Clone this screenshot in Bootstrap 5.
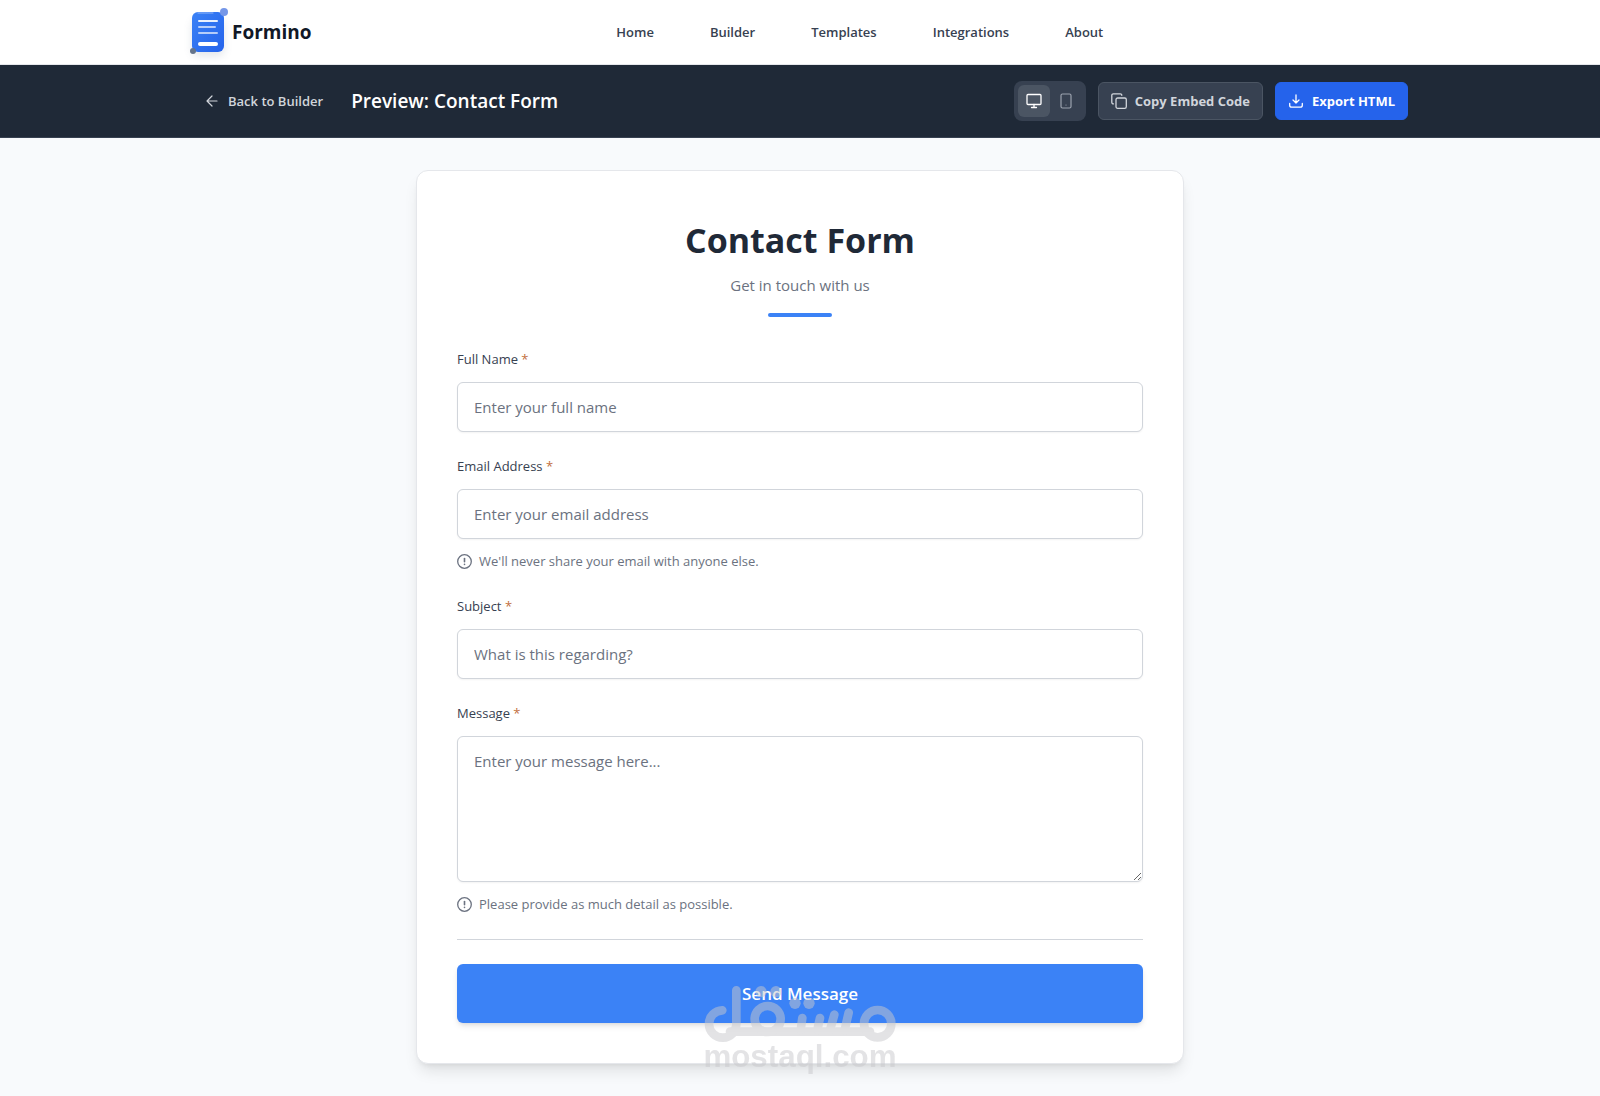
<!DOCTYPE html>
<html lang="en">
<head>
<meta charset="utf-8">
<meta name="viewport" content="width=device-width, initial-scale=1">
<title>Formino - Preview: Contact Form</title>
<link href="https://cdn.jsdelivr.net/npm/bootstrap@5.3.0/dist/css/bootstrap.min.css" rel="stylesheet">
<style>
  body { font-family: "Open Sans", "Noto Sans", sans-serif; background: #f8fafc; color: #1f2937; }
  svg { flex: none; display: block; overflow: visible; }
  .shell { max-width: 1280px; padding: 0 32px; }
  .site-head { border-bottom: 1px solid #e5e7eb; }
  .site-head .shell { min-height: 64px; }
  .brand-link { font-size: 19px; line-height: 28px; font-weight: 700; color: #111827; gap: 4px; }
  .site-nav { gap: 32px; }
  .site-nav .nav-link { padding: 8px 12px; font-size: 13px; line-height: 20px; font-weight: 600; color: #374151; }
  .preview-bar { background: #1f2937; border-bottom: 1px solid #374151; }
  .preview-bar .shell { min-height: 72px; }
  .back-link { font-size: 13px; line-height: 20px; font-weight: 600; color: #d1d5db; padding: 8px 12px; gap: 8px; }
  .preview-title { font-size: 19px; line-height: 28px; font-weight: 600; color: #fff; }
  .tools { gap: 12px; }
  .device-group { background: #374151; border-radius: 8px; padding: 4px; }
  .device-btn { width: 32px; height: 32px; padding: 0; border: 0; border-radius: 6px; color: #9ca3af; }
  .device-btn.active, .device-btn:hover { background: #4b5563; color: #fff; }
  .tool-btn { font-size: 13px; line-height: 20px; font-weight: 700; padding: 8px 12px; border-radius: 6px; gap: 8px; }
  .tool-copy { background: #374151; border: 1px solid #4b5563; color: #d1d5db; }
  .tool-export { background: #2563eb; border: 1px solid #2563eb; color: #fff; }
  .preview-main { padding: 32px 16px; }
  .form-card { max-width: 768px; padding: 40px; border: 1px solid #e5e7eb; border-radius: 12px;
    box-shadow: 0 10px 15px -3px rgba(0,0,0,.1), 0 4px 6px -4px rgba(0,0,0,.1); }
  .form-title { font-size: 34px; line-height: 42px; font-weight: 700; color: #1f2937; margin-bottom: 12px; }
  .form-sub { font-size: 15px; line-height: 24px; color: #6b7280; margin-bottom: 16px; }
  .title-rule { width: 64px; height: 4px; border-radius: 4px; background: #3b82f6; }
  .fields { gap: 24px; }
  .form-label { font-size: 13px; line-height: 21px; color: #374151; margin-bottom: 12px; }
  .req { color: #c2703d; }
  .form-control { font-size: 15px; line-height: 24px; padding: 12px 16px; border: 1px solid #d1d5db; border-radius: 6px;
    box-shadow: 0 1px 2px rgba(0,0,0,.05); color: #1f2937; }
  .form-control::placeholder { color: #6b7280; }
  textarea.form-control { height: 146px; }
  .hint { font-size: 13px; line-height: 21px; color: #6b7280; margin-top: 12px; gap: 7px; }
  .send-area { border-top: 1px solid #d1d5db; padding-top: 24px; }
  .send-btn { background: #3b82f6; border: 0; border-radius: 6px; color: #fff; font-size: 17px; line-height: 27px; font-weight: 600; padding: 16px;
    box-shadow: 0 4px 6px -1px rgba(0,0,0,.1), 0 2px 4px -2px rgba(0,0,0,.1); }
  .stamp { bottom: -33px; opacity: .5; pointer-events: none; }
</style>
</head>
<body>
<header class="site-head bg-white">
  <div class="shell container-fluid d-flex align-items-center">
    <a class="brand-link d-flex align-items-center text-decoration-none" href="#">
      <svg width="36" height="48" viewBox="0 0 36 48" aria-hidden="true">
        <defs><linearGradient id="pageBlue" x1="0" y1="0" x2="1" y2="1"><stop offset="0" stop-color="#3b82f6"/><stop offset="1" stop-color="#2563eb"/></linearGradient>
        <filter id="soft" x="-50%" y="-50%" width="200%" height="200%"><feGaussianBlur stdDeviation="4"/></filter></defs>
        <rect x="0" y="12" width="32" height="36" rx="6" fill="#64748b" opacity=".18" filter="url(#soft)"/>
        <rect x="0" y="4" width="32" height="40" rx="6" fill="url(#pageBlue)"/>
        <circle cx="32" cy="4" r="4" fill="#7597e8"/>
        <circle cx="1" cy="43" r="3" fill="#64748b"/>
        <g stroke="#fff" stroke-linecap="round"><path d="M6 5h15" stroke-width="1" opacity=".45"/><path d="M7 13h18" stroke-width="2" opacity=".9"/><path d="M7 19h16M7 25h18" stroke-width="2" opacity=".65"/><path d="M8 36h16" stroke-width="4"/></g>
      </svg>
      <span>Formino</span>
    </a>
    <nav class="site-nav nav mx-auto" aria-label="Main">
      <a class="nav-link" href="#">Home</a>
      <a class="nav-link" href="#">Builder</a>
      <a class="nav-link" href="#">Templates</a>
      <a class="nav-link" href="#">Integrations</a>
      <a class="nav-link" href="#">About</a>
    </nav>
  </div>
</header>

<section class="preview-bar">
  <div class="shell container-fluid d-flex align-items-center justify-content-between">
    <div class="d-flex align-items-center gap-3">
      <a class="back-link d-flex align-items-center text-decoration-none" href="#">
        <svg width="16" height="16" viewBox="0 0 16 16" fill="none" stroke="currentColor" stroke-width="1.200" stroke-linecap="round" stroke-linejoin="round" aria-hidden="true"><path d="M13 8H3M8 3L3 8l5 5"/></svg>
        Back to Builder
      </a>
      <h1 class="preview-title mb-0">Preview: Contact Form</h1>
    </div>
    <div class="tools d-flex align-items-center">
      <div class="device-group d-flex" role="group" aria-label="Preview size">
        <button type="button" class="device-btn btn active d-flex align-items-center justify-content-center" aria-label="Desktop">
          <svg width="16" height="16" viewBox="0 0 16 16" fill="none" stroke="currentColor" stroke-width="1.300" stroke-linecap="round" stroke-linejoin="round"><rect x="1" y="1.500" width="14" height="10" rx="1"/><path d="M8 11.500v3M5.500 14.500h5"/></svg>
        </button>
        <button type="button" class="device-btn btn d-flex align-items-center justify-content-center" aria-label="Mobile">
          <svg width="16" height="16" viewBox="0 0 16 16" fill="none" stroke="currentColor" stroke-width="1.200" stroke-linecap="round" stroke-linejoin="round"><rect x="3" y="1" width="10" height="14" rx="1.500"/><path d="M8 12h.01"/></svg>
        </button>
      </div>
      <button type="button" class="tool-btn tool-copy btn d-flex align-items-center">
        <svg width="16" height="16" viewBox="0 0 16 16" fill="none" stroke="currentColor" stroke-width="1.300" stroke-linecap="round" stroke-linejoin="round" aria-hidden="true"><rect x="5" y="5" width="10.300" height="10.300" rx="1.600"/><path d="M2.500 10.800A1.500 1.500 0 0 1 .8 9.300V2.300A1.500 1.500 0 0 1 2.300.8h7a1.500 1.500 0 0 1 1.500 1.500"/></svg>
        Copy Embed Code
      </button>
      <button type="button" class="tool-btn tool-export btn d-flex align-items-center">
        <svg width="16" height="16" viewBox="0 0 16 16" fill="none" stroke="currentColor" stroke-width="1.300" stroke-linecap="round" stroke-linejoin="round" aria-hidden="true"><path d="M1.700 10.500v1.700a2 2 0 0 0 2 2h8.600a2 2 0 0 0 2-2v-1.700M8 2v8M5 7l3 3 3-3"/></svg>
        Export HTML
      </button>
    </div>
  </div>
</section>

<main class="preview-main">
  <div class="form-card bg-white mx-auto position-relative">
    <div class="text-center pt-2 mb-3">
      <h2 class="form-title">Contact Form</h2>
      <p class="form-sub">Get in touch with us</p>
      <div class="title-rule mx-auto"></div>
    </div>
    <form class="fields d-flex flex-column pt-3">
      <div>
        <label class="form-label d-block" for="fullName">Full Name <span class="req">*</span></label>
        <input class="form-control" id="fullName" type="text" placeholder="Enter your full name">
      </div>
      <div>
        <label class="form-label d-block" for="email">Email Address <span class="req">*</span></label>
        <input class="form-control" id="email" type="email" placeholder="Enter your email address">
        <div class="hint d-flex align-items-center">
          <svg width="15" height="15" viewBox="0 0 15 15" fill="none" stroke="currentColor" stroke-width="1.300" stroke-linecap="round" aria-hidden="true"><circle cx="7.500" cy="7.500" r="6.800"/><path d="M7.500 4.500v3.300" stroke-width="1.600"/><path d="M7.500 10.400h.01" stroke-width="1.600"/></svg>
          <span>We'll never share your email with anyone else.</span>
        </div>
      </div>
      <div>
        <label class="form-label d-block" for="subject">Subject <span class="req">*</span></label>
        <input class="form-control" id="subject" type="text" placeholder="What is this regarding?">
      </div>
      <div>
        <label class="form-label d-block" for="message">Message <span class="req">*</span></label>
        <textarea class="form-control" id="message" placeholder="Enter your message here..."></textarea>
        <div class="hint d-flex align-items-center">
          <svg width="15" height="15" viewBox="0 0 15 15" fill="none" stroke="currentColor" stroke-width="1.300" stroke-linecap="round" aria-hidden="true"><circle cx="7.500" cy="7.500" r="6.800"/><path d="M7.500 4.500v3.300" stroke-width="1.600"/><path d="M7.500 10.400h.01" stroke-width="1.600"/></svg>
          <span>Please provide as much detail as possible.</span>
        </div>
      </div>
      <div class="send-area">
        <button type="submit" class="send-btn btn w-100 d-block">Send Message</button>
      </div>
    </form>
    <svg class="stamp position-absolute start-50 translate-middle-x" width="240" height="146" viewBox="0 0 720 438" aria-hidden="true">
      <g fill="none" stroke="#c8c8cc" stroke-width="26" stroke-linecap="round">
        <path d="M127 181A41 41 0 1 0 169 221V121"/>
        <path d="M150 245H570"/>
        <circle cx="263" cy="207" r="39"/>
        <circle cx="593" cy="221" r="41"/>
        <path d="M367 204L362 240M420 204L412 240M463 194L450 240M506 188L494 240"/>
      </g>
      <g fill="#c8c8cc"><circle cx="243" cy="125" r="17"/><circle cx="288" cy="125" r="17"/><circle cx="345" cy="160" r="17"/><circle cx="387" cy="160" r="17"/>
      <text x="360" y="350" text-anchor="middle" font-family="Liberation Sans, sans-serif" font-weight="700" font-size="94">mostaql.com</text></g>
    </svg>
  </div>
</main>
<script src="https://cdn.jsdelivr.net/npm/bootstrap@5.3.0/dist/js/bootstrap.bundle.min.js"></script>
</body>
</html>
